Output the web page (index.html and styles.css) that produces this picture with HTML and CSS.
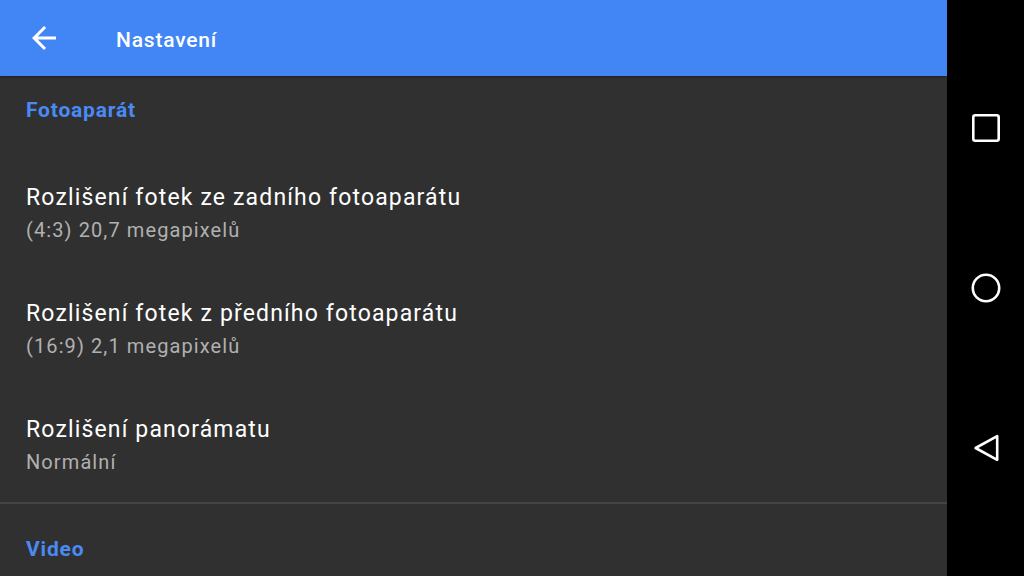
FILE: index.html
```html
<!DOCTYPE html>
<html lang="cs">
<head>
<meta charset="utf-8">
<title>Nastavení</title>
<link rel="stylesheet" href="styles.css">
</head>
<body>
<div class="screen">
  <div class="app">
    <header class="appbar">
      <svg class="back" viewBox="0 0 24 24" width="36" height="36"><path fill="#fff" d="M20 11H7.83l5.59-5.59L12 4l-8 8 8 8 1.41-1.41L7.83 13H20v-2z"/></svg>
      <div class="title">Nastavení</div>
    </header>
    <main class="content">
      <div class="section-head">Fotoaparát</div>
      <div class="list">
        <div class="item">
          <div class="item-title">Rozlišení fotek ze zadního fotoaparátu</div>
          <div class="item-sub">(4:3) 20,7 megapixelů</div>
        </div>
        <div class="item">
          <div class="item-title">Rozlišení fotek z předního fotoaparátu</div>
          <div class="item-sub">(16:9) 2,1 megapixelů</div>
        </div>
        <div class="item">
          <div class="item-title">Rozlišení panorámatu</div>
          <div class="item-sub">Normální</div>
        </div>
      </div>
      <div class="divider"></div>
      <div class="section-head video">Video</div>
    </main>
  </div>
  <nav class="navbar">
    <div class="slot">
      <svg viewBox="0 0 32 32" width="32" height="32"><rect x="3.3" y="3.3" width="25.4" height="25.4" rx="2" fill="none" stroke="#fff" stroke-width="2.6"/></svg>
    </div>
    <div class="slot">
      <svg viewBox="0 0 32 32" width="32" height="32"><circle cx="16" cy="16" r="13.2" fill="none" stroke="#fff" stroke-width="2.6"/></svg>
    </div>
    <div class="slot">
      <svg viewBox="0 0 32 32" width="32" height="32"><path d="M5.6 16 L27.2 4.2 L27.2 27.8 Z" fill="none" stroke="#fff" stroke-width="2.6" stroke-linejoin="round"/></svg>
    </div>
  </nav>
</div>
</body>
</html>
```

FILE: styles.css
```css
html, body {
  margin: 0;
  padding: 0;
  background: #000;
}
body {
  font-family: Roboto, "Noto Sans", "Liberation Sans", sans-serif;
  width: 1024px;
  height: 576px;
  overflow: hidden;
}
.screen {
  display: flex;
  width: 1024px;
  height: 576px;
}
.app {
  width: 947px;
  background: #303030;
  display: flex;
  flex-direction: column;
}
.appbar {
  height: 76px;
  flex: none;
  background: #4285f4;
  display: flex;
  align-items: center;
  padding-left: 26px;
  gap: 54px;
  box-shadow: 0 1px 2px rgba(0, 0, 0, 0.35);
  position: relative;
  z-index: 1;
}
.back {
  display: block;
  flex: none;
}
.title {
  color: #fff;
  font-size: 21px;
  font-weight: 500;
  letter-spacing: 0.8px;
  line-height: 24px;
  padding-top: 3px;
}
.content {
  flex: 1;
}
.section-head {
  color: #4a8af4;
  font-size: 21px;
  font-weight: 700;
  letter-spacing: 0.8px;
  line-height: 24px;
  padding: 22px 26px 34px;
}
.section-head.video {
  padding-top: 33px;
}
.list {
  display: flex;
  flex-direction: column;
  gap: 2px;
}
.item {
  padding: 26px 26px 24px;
}
.item-title {
  color: #fff;
  font-size: 23px;
  letter-spacing: 1.15px;
  line-height: 32px;
}
.item-sub {
  color: #b0b0b0;
  font-size: 20px;
  letter-spacing: 1.1px;
  line-height: 32px;
}
.divider {
  height: 2px;
  background: #444;
}
.navbar {
  width: 77px;
  background: #000;
  display: flex;
  flex-direction: column;
  padding: 48px 0;
  box-sizing: border-box;
}
.slot {
  flex: 1;
  display: flex;
  align-items: center;
  justify-content: center;
}
.slot svg {
  display: block;
}
```
